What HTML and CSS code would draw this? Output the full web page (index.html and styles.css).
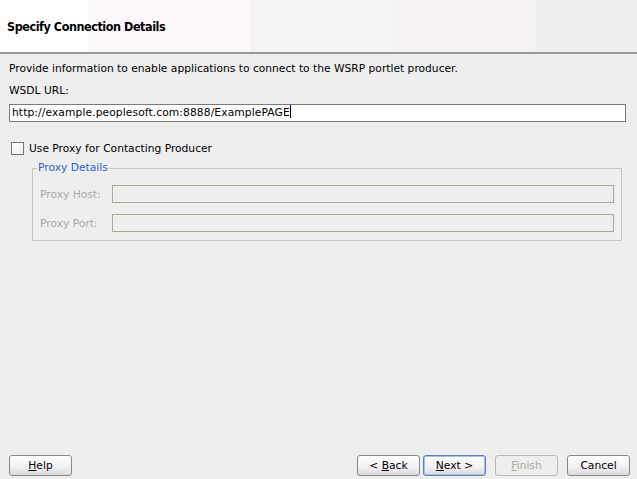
FILE: index.html
```html
<!DOCTYPE html>
<html>
<head>
<meta charset="utf-8">
<link rel="stylesheet" href="styles.css">
</head>
<body>
<div class="dialog">
  <div class="header">
    <div class="bands">
      <div class="band b1"></div>
      <div class="band b2"></div>
      <div class="band b3"></div>
      <div class="band b4"></div>
      <div class="band b5"></div>
    </div>
    <div class="title">Specify Connection Details</div>
  </div>
  <div class="content">
    <div class="intro">Provide information to enable applications to connect to the WSRP portlet producer.</div>
    <div class="label">WSDL URL:</div>
    <div class="field">http://example.peoplesoft.com:8888/ExamplePAGE<span class="caret"></span></div>
    <div class="check-row"><span class="checkbox"></span><span>Use Proxy for Contacting Producer</span></div>
    <div class="group">
      <div class="legend">Proxy Details</div>
      <div class="prow"><span class="plabel">Proxy Host:</span><span class="pfield"></span></div>
      <div class="prow"><span class="plabel">Proxy Port:</span><span class="pfield"></span></div>
    </div>
  </div>
  <div class="footer">
    <button class="btn"><u>H</u>elp</button>
    <div class="right">
      <button class="btn">&lt; <u>B</u>ack</button>
      <button class="btn default"><u>N</u>ext &gt;</button>
      <button class="btn disabled"><u>F</u>inish</button>
      <button class="btn">Cancel</button>
    </div>
  </div>
</div>
</body>
</html>
```
FILE: styles.css
```css
html, body { margin: 0; padding: 0; }
body {
  width: 637px; height: 479px; overflow: hidden;
  background: #eeeeee;
  font-family: "DejaVu Sans", sans-serif;
  font-size: 10.7px; color: #000;
}
.dialog { display: flex; flex-direction: column; height: 479px; }
.header {
  position: relative; height: 52px;
  border-bottom: 2px solid #9a9a9a;
  box-sizing: content-box;
}
.bands { display: flex; height: 52px; }
.band { height: 100%; }
.b1 { width: 88px; background: #ffffff; }
.b2 { width: 162px; background: #fdf8fc; }
.b3 { width: 143px; background: #f4f4f4; }
.b4 { width: 142px; background: #f5f0f3; }
.b5 { flex: 1; background: #eeeeee; }
.title {
  position: absolute; left: 7px; top: 19px;
  font-family: "DejaVu Sans Condensed", "DejaVu Sans", sans-serif;
  font-size: 12.5px; font-weight: bold; letter-spacing: -0.45px;
}
.content { padding: 8px 11px 0 9px; flex: 1; }
.intro { line-height: 14px; }
.label { margin-top: 8px; line-height: 14px; }
.field {
  margin-top: 6px; height: 18px; box-sizing: border-box;
  background: #fff; border: 1px solid #7a7a7a;
  padding: 0 2px; line-height: 16px; letter-spacing: 0.1px;
}
.caret { display: inline-block; width: 1px; height: 13px; background: #000; vertical-align: -2px; }
.check-row { display: flex; align-items: center; margin-top: 19px; margin-left: 2px; gap: 5px; height: 14px; }
.checkbox {
  width: 11px; height: 11px; border: 1px solid #777;
  background: linear-gradient(135deg, #fff, #ececf0);
}
.group {
  position: relative;
  margin: 13px 4px 0 23px;
  border: 1px solid #c6c6c6;
  height: 73px; box-sizing: border-box;
  padding: 16px 7px 0 7px;
}
.legend {
  position: absolute; left: 4px; top: -8px;
  background: #eeeeee; color: #2f62c8; padding: 0 1px; line-height: 14px;
}
.prow { display: flex; align-items: center; height: 18px; margin-bottom: 11px; }
.plabel { width: 72px; color: #a9a9a9; }
.pfield { flex: 1; height: 18px; box-sizing: border-box; border: 1px solid #a8aa98; }
.footer {
  display: flex; justify-content: space-between;
  padding: 0 7px 3px 9px; height: 21px;
}
.right { display: flex; gap: 3px; }
.btn {
  font-family: "DejaVu Sans", sans-serif; font-size: 10.7px;
  width: 63px; height: 21px; padding: 0;
  border: 1px solid #8a8a8a; border-radius: 3px;
  background: linear-gradient(#ffffff, #f1f0f2 60%, #dcd8df);
  color: #000;
}
.btn.default { border-color: #5d7fb8; box-shadow: inset 0 0 0 1px #a9c1e8; }
.btn.disabled { color: #aaa9a0; border-color: #b8b8ac; background: #eeeeee; margin-left: 6px; margin-right: 6px; }
```
